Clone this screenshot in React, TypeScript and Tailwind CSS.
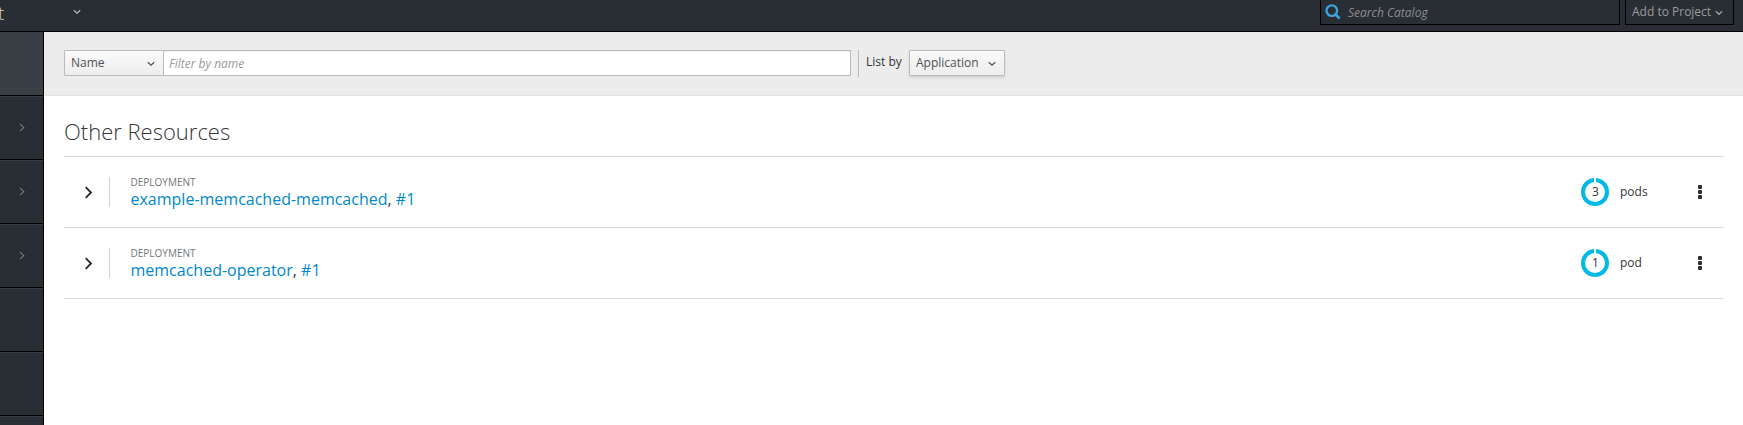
import React from "react";

type ChevronProps = { className?: string; direction?: "down" | "right"; weight?: number };

function Chevron({ className, direction = "down", weight = 1.2 }: ChevronProps) {
  const points = direction === "down" ? "0.8,1.2 4,4.2 7.2,1.2" : "1,0.8 4.8,4.5 1,8.2";
  const box = direction === "down" ? "0 0 8 6" : "0 0 6 9";
  return (
    <svg viewBox={box} className={className} fill="none" stroke="currentColor" strokeWidth={weight}>
      <polyline points={points} />
    </svg>
  );
}

function Header() {
  return (
    <header className="flex h-8 shrink-0 items-start border-b border-black bg-[#292e34]">
      <span className="-ml-[2px] h-6 w-[74px] pt-px text-[19px] leading-6 font-light text-[#d1d1d1]">t</span>
      <Chevron className="mt-[9px] ml-px h-[6px] w-2 text-[#bbb]" />
      <div className="ml-auto flex h-[25px] w-[300px] items-center border border-t-0 border-black pl-1">
        <svg viewBox="0 0 16 16" className="h-4 w-4 text-[#39a5dc]" fill="none" stroke="currentColor">
          <circle cx="6.8" cy="6.6" r="5.3" strokeWidth="2.3" />
          <path d="M10.6 10.6L14.6 14.4" strokeWidth="2.7" />
        </svg>
        <span className="mt-[2px] ml-[7px] text-[12px] leading-5 text-[#8b8d8f] italic">Search Catalog</span>
      </div>
      <div className="mr-[9px] ml-[5px] flex h-[25px] w-[109px] items-center border border-t-0 border-black pl-[6px] text-[#9c9c9c]">
        <span className="text-[12px] leading-5">Add to Project</span>
        <Chevron className="mt-[2px] ml-[4px] h-[6px] w-2" weight={1.4} />
      </div>
    </header>
  );
}

const navCells = [
  { active: true, arrow: false },
  { active: false, arrow: true },
  { active: false, arrow: true },
  { active: false, arrow: true },
  { active: false, arrow: false },
  { active: false, arrow: false },
  { active: false, arrow: false },
];

function Sidebar() {
  return (
    <nav className="h-full w-11 shrink-0 overflow-hidden border-r border-black bg-[#292e34]">
      {navCells.map((cell, i) => (
        <div
          key={i}
          className={
            cell.active
              ? "h-16 border-b border-black bg-[#393f44]"
              : "flex h-16 items-center border-b border-black pb-px pl-[18.5px] text-[#72767b] shadow-[inset_0_1px_0_#363b40]"
          }
        >
          {cell.arrow && <Chevron direction="right" weight={1.1} className="h-[9px] w-[6px]" />}
        </div>
      ))}
    </nav>
  );
}

function Toolbar() {
  return (
    <div className="flex h-16 items-start border-b border-[#e1e1e1] bg-[#ececec] pt-[18px] pl-5 text-[12px] text-[#4d5258]">
      <div className="flex h-[26px] w-[100px] items-center justify-between rounded-l-[1px] border border-[#bbb] bg-linear-to-b from-[#fafafa] to-[#ededed] pr-2 pl-[6px]">
        <span className="-mt-px">Name</span>
        <Chevron className="mt-[2px] h-[6px] w-2" />
      </div>
      <div className="-ml-px flex h-[26px] w-[688px] items-center border border-[#bbb] bg-white pt-px pl-[5px] text-[#999] italic shadow-[inset_0_1px_1px_rgba(3,3,3,0.075)]">
        Filter by name
      </div>
      <div className="ml-[7px] h-[27px] w-px bg-[#bbb]" />
      <span className="ml-[7px] w-[43px] pt-[3px] leading-[18px] whitespace-nowrap text-[#363636]">List by</span>
      <div className="flex h-[26px] w-24 items-center justify-between rounded-[1px] border border-[#bbb] bg-linear-to-b from-[#fafafa] to-[#ededed] pr-2 pl-[6px] shadow-[0_2px_3px_rgba(3,3,3,0.1)]">
        <span className="-mt-px">Application</span>
        <Chevron className="mt-[2px] h-[6px] w-2" />
      </div>
    </div>
  );
}

type Deployment = { name: string; pods: number };

const deployments: Deployment[] = [
  { name: "example-memcached-memcached", pods: 3 },
  { name: "memcached-operator", pods: 1 },
];

function PodRing({ count }: { count: number }) {
  return (
    <div className="grid h-[28px] w-[28px] place-items-center">
      <svg viewBox="0 0 28 28" className="col-start-1 row-start-1 h-7 w-7">
        <circle cx="14" cy="14" r="12" fill="none" stroke="#00b9e4" strokeWidth="4" />
        <rect x="13" y="0" width="2" height="4.5" fill="#fff" />
      </svg>
      <span className="col-start-1 row-start-1 pl-px text-[12px] leading-4">{count}</span>
    </div>
  );
}

function DeploymentRow({ name, pods }: Deployment) {
  return (
    <div className="flex h-[71px] items-center border-b border-[#d9d9d9]">
      <svg
        viewBox="0 0 9 13"
        className="ml-5 h-[13px] w-[9px] text-[#292e34]"
        fill="none"
        stroke="currentColor"
        strokeWidth="1.9"
      >
        <polyline points="1.7,1.2 7,6.5 1.7,11.8" />
      </svg>
      <div className="ml-[16px] h-[30px] w-px bg-[#d1d1d1]" />
      <div className="ml-[21px] -translate-x-[0.5px] pb-px">
        <div className="text-[10px] leading-[14px] text-[#72767b]">DEPLOYMENT</div>
        <div className="text-[16px] leading-5">
          <span className="text-[#0088ce]">{name}</span>, <span className="text-[#0088ce]">#1</span>
        </div>
      </div>
      <div className="ml-auto flex items-center text-[12px]">
        <PodRing count={pods} />
        <span className="ml-[11px] w-[78px] leading-4">{pods === 1 ? "pod" : "pods"}</span>
        <svg viewBox="0 0 4 14" className="mr-[22px] h-[14px] w-1" fill="#292e34">
          <rect y="0" width="4" height="4" rx="1" />
          <rect y="5" width="4" height="4" rx="1" />
          <rect y="10" width="4" height="4" rx="1" />
        </svg>
      </div>
    </div>
  );
}

export default function App() {
  return (
    <div className="flex h-[425px] w-[1743px] flex-col overflow-hidden bg-white font-['Open_Sans',sans-serif] text-[#363636]">
      <Header />
      <div className="flex min-h-0 flex-1">
        <Sidebar />
        <main className="flex-1">
          <Toolbar />
          <section className="mr-[19px] ml-5 pt-[19px]">
            <h1 className="h-[42px] border-b border-[#d9d9d9] text-[22px] leading-8 font-light">Other Resources</h1>
            {deployments.map((d) => (
              <DeploymentRow key={d.name} {...d} />
            ))}
          </section>
        </main>
      </div>
    </div>
  );
}
